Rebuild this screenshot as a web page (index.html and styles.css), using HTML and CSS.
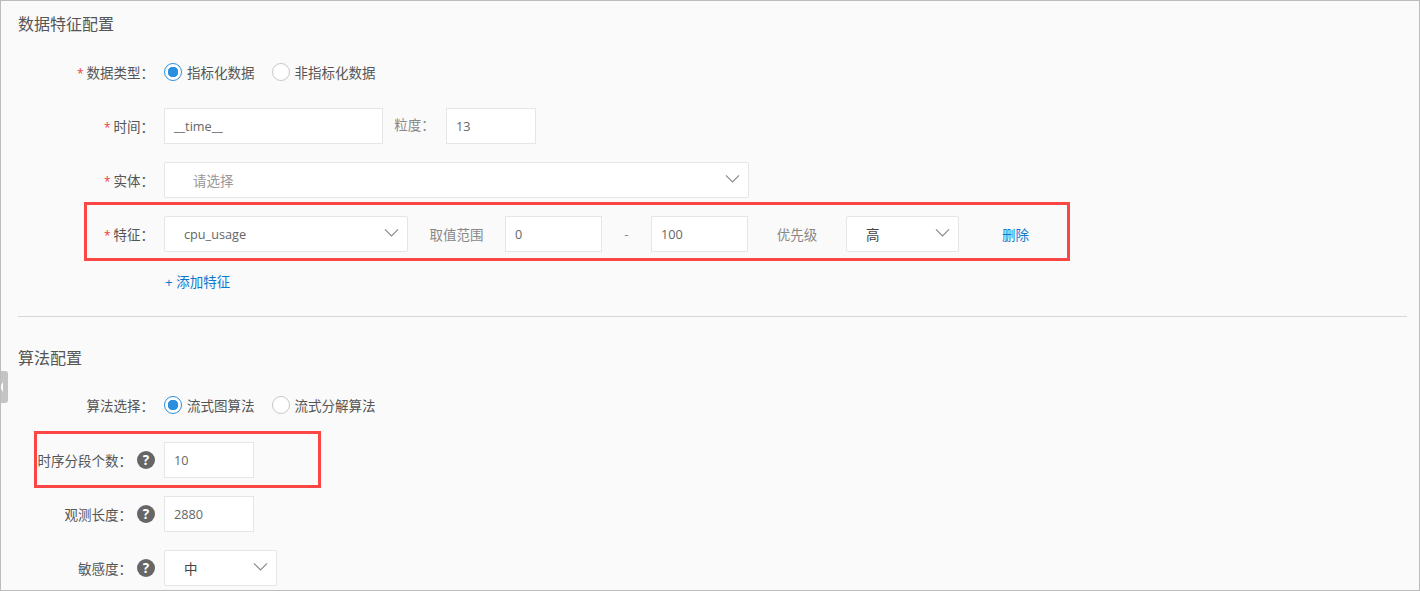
FILE: index.html
```html
<!DOCTYPE html>
<html lang="zh-CN">
<head>
<meta charset="utf-8">
<title>数据特征配置</title>
<link rel="stylesheet" href="styles.css">
</head>
<body>
<main class="frame">
  <span class="handle"><span class="handle-arrow"></span></span>
  <span class="mark mark-feature"></span>
  <span class="mark mark-segments"></span>

  <h2 class="title">数据特征配置</h2>
  <div class="row row-first">
    <label class="label"><i class="req">*</i>数据类型：</label>
    <span class="radio on"></span><span class="radio-text">指标化数据</span>
    <span class="radio"></span><span class="radio-text">非指标化数据</span>
  </div>
  <div class="row">
    <label class="label"><i class="req">*</i>时间：</label>
    <span class="box w219">__time__</span>
    <span class="aside w63">粒度：</span>
    <span class="box w90">13</span>
  </div>
  <div class="row">
    <label class="label"><i class="req">*</i>实体：</label>
    <span class="box select w585 placeholder">请选择<svg class="chev" viewBox="0 0 16 10"><path d="M1 1.5 8 8.500 15 1.500"/></svg></span>
  </div>
  <div class="row">
    <label class="label"><i class="req">*</i>特征：</label>
    <span class="box select w244">cpu_usage<svg class="chev" viewBox="0 0 16 10"><path d="M1 1.500 8 8.500 15 1.500"/></svg></span>
    <span class="aside w97">取值范围</span>
    <span class="box w97">0</span>
    <span class="aside dash">-</span>
    <span class="box w97">100</span>
    <span class="aside w98">优先级</span>
    <span class="box select w113 dark">高<svg class="chev" viewBox="0 0 16 10"><path d="M1 1.500 8 8.500 15 1.500"/></svg></span>
    <a class="link del">删除</a>
  </div>
  <div class="add"><a class="link">+ 添加特征</a></div>
  <hr class="rule">

  <h2 class="title title-second">算法配置</h2>
  <div class="row row-algo">
    <label class="label">算法选择：</label>
    <span class="radio on"></span><span class="radio-text">流式图算法</span>
    <span class="radio"></span><span class="radio-text">流式分解算法</span>
  </div>
  <div class="row">
    <label class="label help-label">时序分段个数：<span class="help">?</span></label>
    <span class="box w90">10</span>
  </div>
  <div class="row">
    <label class="label help-label">观测长度：<span class="help">?</span></label>
    <span class="box w90">2880</span>
  </div>
  <div class="row">
    <label class="label help-label">敏感度：<span class="help">?</span></label>
    <span class="box select w113 dark">中<svg class="chev" viewBox="0 0 16 10"><path d="M1 1.500 8 8.500 15 1.500"/></svg></span>
  </div>
</main>
</body>
</html>
```
FILE: styles.css
```css
* { box-sizing: border-box; }
html, body { margin: 0; height: 100%; }
body {
  font-family: "Open Sans", "Noto Sans CJK SC", sans-serif;
  font-size: 13.500px;
  color: #555;
  background: #fafafa;
  overflow: hidden;
}
.frame {
  position: relative;
  width: 1420px;
  height: 591px;
  padding-left: 17px;
  border: 1px solid #bcbcbc;
  background: #fafafa;
  overflow: hidden;
}
.title {
  margin: 0;
  height: 24px;
  margin-top: 11px;
  font-size: 16px;
  line-height: 24px;
  font-weight: 400;
  color: #555;
}
.title-second { margin-top: 29px; }
.row {
  display: flex;
  align-items: center;
  height: 36px;
  margin-top: 18px;
}
.row-algo { margin-top: 17px; margin-bottom: 19px; }
.label {
  flex: none;
  width: 146px;
  padding-right: 10px;
  text-align: right;
  white-space: nowrap;
  color: #555;
}
.help-label {
  display: flex;
  align-items: center;
  justify-content: flex-end;
  padding-right: 9px;
}
.req {
  margin-right: 3px;
  font-size: 12px;
  font-style: normal;
  color: #f04134;
}
.radio {
  flex: none;
  width: 18px;
  height: 18px;
  margin-right: 5px;
  border: 1px solid #c8c8c8;
  border-radius: 50%;
  background: #fff;
}
.radio.on {
  border-color: #2a90dd;
  background: radial-gradient(circle, #2a90dd 0 5px, #fff 5.500px);
}
.radio-text {
  margin-right: 17px;
  color: #555;
}
.box {
  position: relative;
  display: flex;
  align-items: center;
  flex: none;
  height: 36px;
  padding-left: 9px;
  border: 1px solid #e6e6e6;
  background: #fff;
  color: #666;
  font-size: 12.700px;
}
.select { padding-left: 19px; border-radius: 2px; }
.placeholder { padding-left: 28px; color: #999; font-size: 13.500px; }
.dark { color: #444; font-size: 13.500px; }
.chev {
  position: absolute;
  right: 8px;
  top: 11px;
  width: 15px;
  height: 9.400px;
  fill: none;
  stroke: #888;
  stroke-width: 1.200;
}
.w90 { width: 90px; }
.w97 { width: 97px; }
.w113 { width: 113px; }
.w219 { width: 219px; }
.w244 { width: 244px; }
.w585 { width: 585px; }
.aside {
  flex: none;
  color: #888;
  text-align: center;
}
.w63 { width: 63px; margin-top: -4px; }
.aside.w97 { width: 97px; }
.aside.w98 { width: 98px; }
.dash { width: 49px; }
.link { color: #0a78d2; }
.del { margin-left: 43px; }
.add {
  height: 20px;
  margin-top: 20px;
  padding-left: 147px;
  line-height: 20px;
}
.rule {
  height: 1px;
  width: 1389px;
  margin: 24px 0 0;
  border: 0;
  background: #d4d8dc;
}
.help {
  display: inline-flex;
  align-items: center;
  justify-content: center;
  width: 18px;
  height: 18px;
  margin-left: 5px;
  border-radius: 50%;
  background: #666;
  color: #fff;
  font-size: 13.500px;
  font-weight: 700;
}
.handle {
  position: absolute;
  left: -1px;
  top: 370px;
  display: flex;
  align-items: center;
  width: 8px;
  height: 32px;
  border-radius: 0 3px 3px 0;
  background: #c4c4c4;
}
.handle-arrow {
  width: 0;
  height: 0;
  border: 5px solid transparent;
  border-left: 0;
  border-right: 3px solid #fff;
}
.mark {
  position: absolute;
  border: 3px solid #fb4646;
  z-index: 2;
}
.mark-feature { left: 83px; top: 201px; width: 986px; height: 59px; }
.mark-segments { left: 33px; top: 430px; width: 287px; height: 57px; }
```
